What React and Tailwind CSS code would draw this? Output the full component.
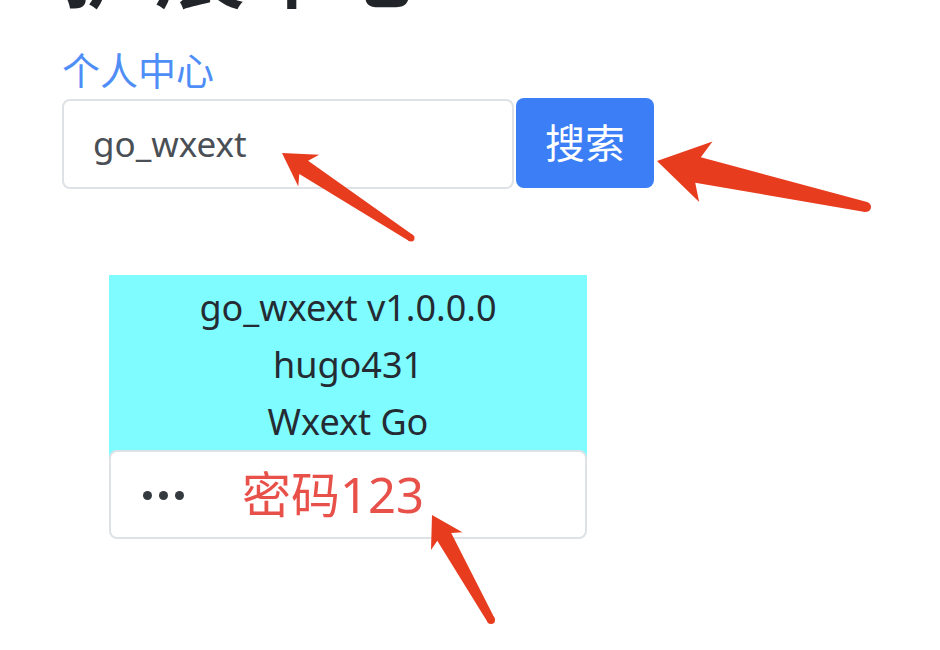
import React from 'react';

// red annotation arrow, tapered from a thin round tail up to the head
function Arrow({ tip, tail, headLen, notchLen, headHalf, neckHalf, tailHalf }) {
  const dx = tail[0] - tip[0];
  const dy = tail[1] - tip[1];
  const len = Math.hypot(dx, dy);
  const ux = dx / len;
  const uy = dy / len;
  const nx = -uy;
  const ny = ux;
  const at = (d, s) => [tip[0] + ux * d + nx * s, tip[1] + uy * d + ny * s];
  const pts = [
    tip,
    at(headLen, headHalf),
    at(notchLen, neckHalf),
    [tail[0] + nx * tailHalf, tail[1] + ny * tailHalf],
    [tail[0] - nx * tailHalf, tail[1] - ny * tailHalf],
    at(notchLen, -neckHalf),
    at(headLen, -headHalf),
  ];
  return (
    <g fill="#e83c1f">
      <polygon points={pts.map((p) => p.join(',')).join(' ')} />
      <circle cx={tail[0]} cy={tail[1]} r={tailHalf} />
    </g>
  );
}

export default function App() {
  return (
    <div className="relative w-[940px] h-[650px] overflow-hidden bg-white font-['Noto_Sans','Noto_Sans_CJK_SC',sans-serif]">
      <div className="pl-[62px]">
        <h1 className="-mt-[80px] text-[92px] leading-none font-medium text-[#212529]">扩展中心</h1>
        <a href="#" className="block mt-[31px] text-[38px] leading-[55px] text-[#4f8ef7]">
          个人中心
        </a>
        <div className="flex items-start gap-[2px]">
          <div className="w-[452px] h-[90px] mt-[1px] border-2 border-[#dee2e6] rounded-[8px] flex items-center pl-[29px] text-[35px] text-[#4a4f55]">
            go_wxext
          </div>
          <button
            type="button"
            className="w-[138px] h-[90px] rounded-[8px] bg-[#3b7ef6] text-white text-[40px] flex items-center justify-center"
          >
            搜索
          </button>
        </div>
      </div>

      <div className="ml-[109px] mt-[86px] w-[478px]">
        <div className="bg-[#7ffcff] pt-[4px] pb-[8px] text-center text-[36px] leading-[57px] text-[#242b33]">
          <div>go_wxext v1.0.0.0</div>
          <div>hugo431</div>
          <div>Wxext Go</div>
        </div>
        <div className="-mt-[8px] h-[89px] bg-white border-2 border-[#dee2e6] rounded-[8px] flex items-center pl-[32px]">
          <div className="flex gap-[7px] mt-[2px]">
            <span className="w-[9px] h-[9px] rounded-full bg-[#343a40]" />
            <span className="w-[9px] h-[9px] rounded-full bg-[#343a40]" />
            <span className="w-[9px] h-[9px] rounded-full bg-[#343a40]" />
          </div>
          <span className="ml-[58px] text-[49px] leading-none text-[#e8504a]">密码123</span>
        </div>
      </div>

      <svg className="absolute inset-0 pointer-events-none" width="940" height="650">
        <Arrow tip={[282, 153]} tail={[411, 238]} headLen={32} notchLen={26} headHalf={19} neckHalf={8} tailHalf={3.5} />
        <Arrow tip={[657, 161]} tail={[866, 207]} headLen={50} notchLen={42} headHalf={31} neckHalf={13} tailHalf={5} />
        <Arrow tip={[432, 515]} tail={[491, 620]} headLen={30} notchLen={25} headHalf={18} neckHalf={8} tailHalf={4} />
      </svg>
    </div>
  );
}
